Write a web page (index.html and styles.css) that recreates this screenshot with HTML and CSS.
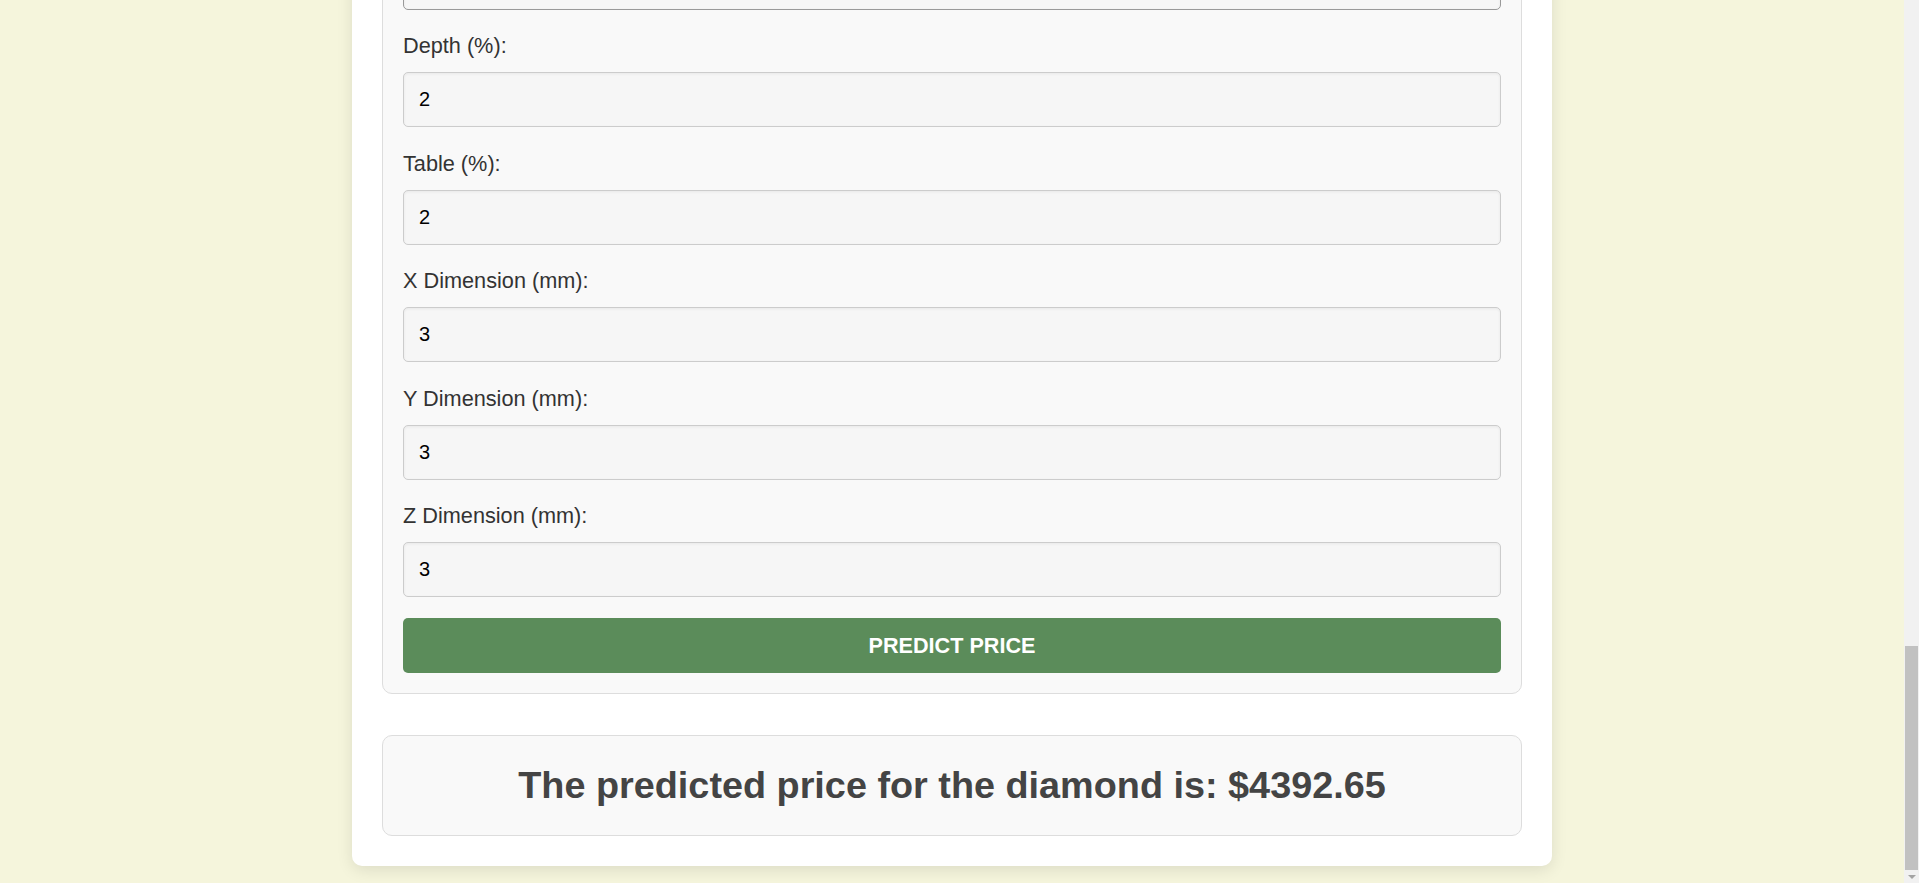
FILE: index.html
```html
<!DOCTYPE html>
<html lang="en">
<head>
<meta charset="utf-8">
<title>Diamond Price Prediction</title>
<link rel="stylesheet" href="styles.css">
</head>
<body>
<div class="screen">
  <main class="viewport">
    <div class="card">
      <form class="form">
        <div class="field">
          <select class="input select" aria-label="Clarity"><option></option></select>
        </div>
        <div class="field">
          <label class="label" for="depth">Depth (%):</label>
          <input class="input" id="depth" type="text" value="2">
        </div>
        <div class="field">
          <label class="label" for="table">Table (%):</label>
          <input class="input" id="table" type="text" value="2">
        </div>
        <div class="field">
          <label class="label" for="x">X Dimension (mm):</label>
          <input class="input" id="x" type="text" value="3">
        </div>
        <div class="field">
          <label class="label" for="y">Y Dimension (mm):</label>
          <input class="input" id="y" type="text" value="3">
        </div>
        <div class="field">
          <label class="label" for="z">Z Dimension (mm):</label>
          <input class="input" id="z" type="text" value="3">
        </div>
        <button class="btn" type="button">Predict Price</button>
      </form>
      <div class="result">
        <h2 class="result-text">The predicted price for the diamond is: $4392.65</h2>
      </div>
    </div>
  </main>
  <div class="scrollbar" aria-hidden="true">
    <div class="track">
      <div class="thumb"></div>
    </div>
    <div class="arrow-down"></div>
  </div>
</div>
</body>
</html>
```
FILE: styles.css
```css
html, body {
  margin: 0;
  padding: 0;
  height: 100%;
  overflow: hidden;
}

body {
  background: #f5f5dc;
  font-family: "Liberation Sans", Arial, sans-serif;
  color: #333;
}

.screen {
  display: flex;
  height: 100vh;
}

.viewport {
  flex: 1;
  min-width: 0;
  overflow: hidden;
  display: flex;
  flex-direction: column;
  justify-content: flex-end;
  padding-bottom: 17px;
  box-sizing: border-box;
}

.card {
  flex: none;
  width: 1200px;
  margin: 0 auto;
  box-sizing: border-box;
  background: #fff;
  border-radius: 10px;
  padding: 30px;
  box-shadow: 0 4px 16px rgba(0, 0, 0, 0.1);
}

.form {
  display: flex;
  flex-direction: column;
  background: #f9f9f9;
  border: 1px solid #ddd;
  border-radius: 10px;
  padding: 20px;
  margin: 0;
}

.field {
  display: flex;
  flex-direction: column;
}

.field + .field {
  margin-top: 24.5px;
}

.label {
  display: block;
  font-size: 21.7px;
  line-height: 24px;
  margin-bottom: 14px;
  color: #333;
}

.input {
  display: block;
  box-sizing: border-box;
  width: 100%;
  height: 55px;
  margin: 0;
  padding: 0 15px;
  border: 1px solid #ccc;
  border-radius: 5px;
  background: #f6f6f6;
  box-shadow: inset 0 1px 3px rgba(0, 0, 0, 0.06);
  font-family: "Liberation Sans", Arial, sans-serif;
  font-size: 20px;
  color: #000;
}

.select {
  border-color: #999;
}

.btn {
  display: block;
  width: 100%;
  height: 55px;
  margin-top: 21px;
  border: none;
  border-radius: 5px;
  background: #5b8c5a;
  color: #fff;
  font-family: "Liberation Sans", Arial, sans-serif;
  font-size: 21.6px;
  font-weight: bold;
  text-transform: uppercase;
  cursor: pointer;
}

.result {
  margin-top: 41px;
  box-sizing: border-box;
  height: 101px;
  display: flex;
  align-items: center;
  justify-content: center;
  background: #f9f9f9;
  border: 1px solid #ddd;
  border-radius: 10px;
}

.result-text {
  margin: 0;
  font-size: 37.8px;
  font-weight: bold;
  color: #444;
  text-align: center;
}

.scrollbar {
  flex: none;
  width: 15px;
  display: flex;
  flex-direction: column;
  background: #f1f1f1;
}

.track {
  flex: 1;
  display: flex;
  flex-direction: column;
  justify-content: flex-end;
  padding: 0 1px;
}

.thumb {
  height: 224px;
  background: #c1c1c1;
}

.arrow-down {
  height: 13px;
  display: flex;
  align-items: center;
  justify-content: center;
}

.arrow-down::before {
  content: "";
  width: 0;
  height: 0;
  border-left: 4px solid transparent;
  border-right: 4px solid transparent;
  border-top: 4px solid #a3a3a3;
}
```
